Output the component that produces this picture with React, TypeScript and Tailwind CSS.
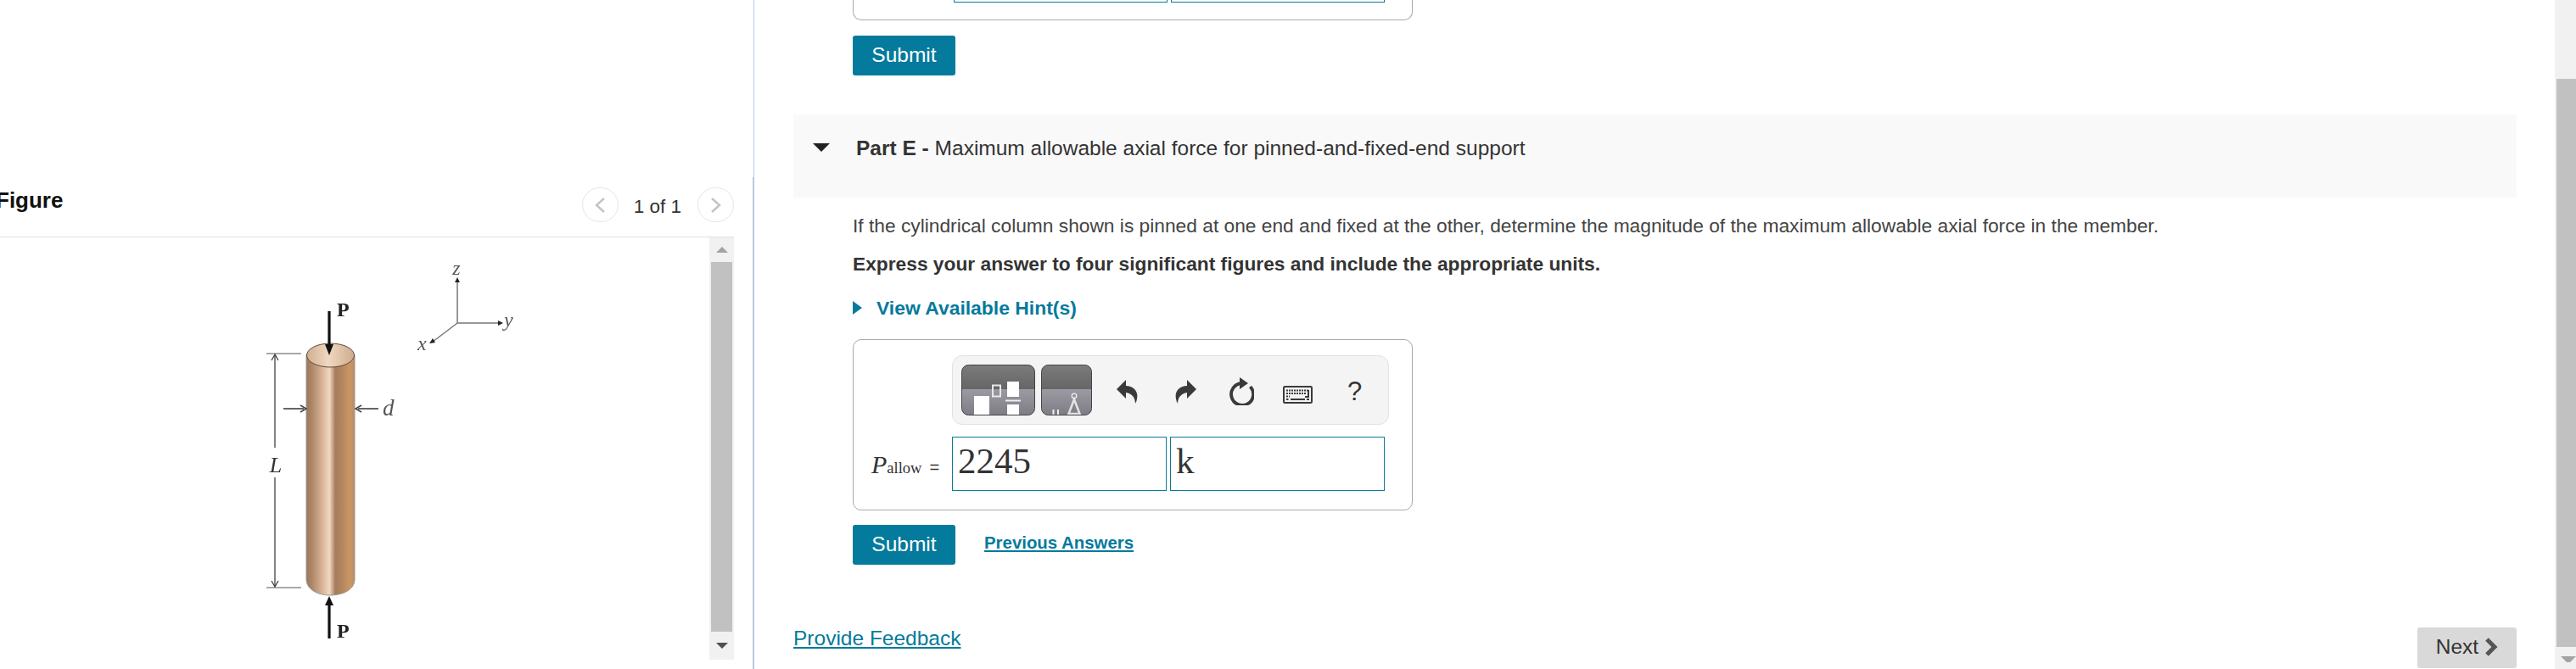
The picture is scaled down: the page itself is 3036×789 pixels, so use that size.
import React from 'react';

const sans = "font-['Liberation_Sans',Arial,sans-serif]";

const SubmitButton = () => (
  <button className="h-[47px] w-[121px] rounded-[3px] bg-[#047a9c] pb-[1px] text-[24.500px] text-white">Submit</button>
);

const Undo = ({ flip }: { flip?: boolean }) => (
  <svg width="25" height="28" viewBox="0 0 25 28" className={flip ? '-scale-x-100' : ''}>
    <path d="M0 11 L11 0 V7 C20 7 26 14 24 22 C24 24 23 26 22 28 C22 21 18 16 11 15 V22 Z" fill="#3a3a3a" />
  </svg>
);

const Reset = () => (
  <svg width="30" height="33" viewBox="0 0 30 33">
    <path d="M15 7 A13 13 0 1 0 25.500 11" fill="none" stroke="#3a3a3a" strokeWidth="3.800" />
    <path d="M13 0 L23 7 L13 14 Z" fill="#3a3a3a" />
  </svg>
);

const Keyboard = () => (
  <svg width="35" height="21" viewBox="0 0 35 21">
    <rect x="1" y="1" width="33" height="19" rx="1.5" fill="#f4f4f4" stroke="#3a3a3a" strokeWidth="2" />
    <path d="M4 5.500H30M4 9H27M4 12.500H8" stroke="#3a3a3a" strokeWidth="2.200" strokeDasharray="2 1" fill="none" />
    <path d="M30 5V13H26M9 16H26M4 16H6.500M28 16H31" stroke="#3a3a3a" strokeWidth="2" fill="none" />
  </svg>
);

const TemplateButtons = () => (
  <svg width="154" height="60" viewBox="0 0 154 60">
    <defs>
      <linearGradient id="tplTop" x1="0" y1="0" x2="0" y2="1">
        <stop offset="0" stopColor="#7b7b7d" />
        <stop offset="1" stopColor="#666666" />
      </linearGradient>
      <linearGradient id="tplBot" x1="0" y1="0" x2="0" y2="1">
        <stop offset="0" stopColor="#9c9aa3" />
        <stop offset="1" stopColor="#7d7c84" />
      </linearGradient>
      <clipPath id="tplA"><rect x="0.5" y="0.5" width="86" height="59" rx="8" /></clipPath>
      <clipPath id="tplB"><rect x="94.5" y="0.5" width="59" height="59" rx="8" /></clipPath>
    </defs>
    <g clipPath="url(#tplA)">
      <rect width="87" height="29" fill="url(#tplTop)" />
      <rect y="29" width="87" height="31" fill="url(#tplBot)" />
      <rect x="15" y="37" width="18" height="22" fill="#fff" />
      <rect x="37" y="24.5" width="9" height="13" fill="none" stroke="#e8e8e8" strokeWidth="2" />
      <rect x="54" y="20" width="14" height="18" fill="#fff" />
      <rect x="52" y="41.5" width="18" height="2" fill="#eee" />
      <rect x="54" y="47" width="14" height="12" fill="#fff" />
    </g>
    <rect x="0.5" y="0.5" width="86" height="59" rx="8" fill="none" stroke="#444" />
    <g clipPath="url(#tplB)">
      <rect x="94" width="60" height="29" fill="url(#tplTop)" />
      <rect x="94" y="29" width="60" height="31" fill="url(#tplBot)" />
      <path d="M108.500 53V59M114 53V59" stroke="#eee" strokeWidth="2" />
      <path d="M133 41 L126.500 58 H139.500 Z" fill="none" stroke="#e4e4e4" strokeWidth="2.500" />
      <circle cx="133" cy="37" r="2.800" fill="none" stroke="#eee" strokeWidth="1.300" />
    </g>
    <rect x="94.500" y="0.500" width="59" height="59" rx="8" fill="none" stroke="#444" />
  </svg>
);

const ColumnFigure = () => (
  <svg viewBox="0 280 836 498" className="h-[498px] w-[836px] blur-[0.4px]">
    <defs>
      <linearGradient id="rod" x1="0" y1="0" x2="1" y2="0">
        <stop offset="0" stopColor="#9c7658" />
        <stop offset="0.12" stopColor="#ad8768" />
        <stop offset="0.35" stopColor="#dcb99c" />
        <stop offset="0.48" stopColor="#f1d8c2" />
        <stop offset="0.6" stopColor="#a67c5a" />
        <stop offset="0.72" stopColor="#b0845f" />
        <stop offset="0.9" stopColor="#cb9663" />
        <stop offset="1" stopColor="#b88d68" />
      </linearGradient>
      <linearGradient id="cap" x1="0" y1="0" x2="1" y2="0">
        <stop offset="0" stopColor="#d2ae90" />
        <stop offset="0.45" stopColor="#f0d8c2" />
        <stop offset="1" stopColor="#cfab8c" />
      </linearGradient>
    </defs>

    <path d="M361 419 V683 C361 695 374 702 389 702 C405 702 418 695 418 683 V419 Z" fill="url(#rod)" stroke="#9a9a94" strokeWidth="1" />
    <ellipse cx="389.500" cy="419" rx="28" ry="14" fill="url(#cap)" stroke="#5b4a3d" strokeWidth="1" />

    {/* dimension L */}
    <path d="M314 417H355M314 693H355" stroke="#555" strokeWidth="1.200" />
    <path d="M324 419V528M324 563V691" stroke="#333" strokeWidth="1.200" />
    <path d="M320 425L324 418L328 425M320 685L324 692L328 685" fill="none" stroke="#333" strokeWidth="1.200" />
    <text x="325" y="557" textAnchor="middle" fontFamily="Liberation Serif" fontStyle="italic" fontSize="26" fill="#333">L</text>

    {/* load arrows */}
    <path d="M388 367V408" stroke="#111" strokeWidth="3.200" />
    <path d="M383 406H393L388 419Z" fill="#111" />
    <path d="M388 712V753" stroke="#111" strokeWidth="3.200" />
    <path d="M383 714H393L388 703Z" fill="#111" />
    <text x="397" y="373" fontFamily="Liberation Serif" fontWeight="700" fontSize="24" fill="#222">P</text>
    <text x="397" y="752" fontFamily="Liberation Serif" fontWeight="700" fontSize="24" fill="#222">P</text>

    {/* diameter */}
    <path d="M334 482H358M422 482H446" stroke="#666" strokeWidth="2" />
    <path d="M354 478L361 482L354 486M426 478L419 482L426 486" fill="none" stroke="#444" strokeWidth="1.500" />
    <text x="451" y="490" fontFamily="Liberation Serif" fontStyle="italic" fontSize="27" fill="#555">d</text>

    {/* axes */}
    <path d="M539 381V332M539 381H588M539 381L510 403" stroke="#777" strokeWidth="1.500" fill="none" />
    <path d="M536 333L539 327L542 333ZM587 378L593 381L587 384ZM510 399L506 405L513 404Z" fill="#222" />
    <text x="538" y="324" textAnchor="middle" fontFamily="Liberation Serif" fontStyle="italic" fontSize="24" fill="#555">z</text>
    <text x="594" y="385" fontFamily="Liberation Serif" fontStyle="italic" fontSize="24" fill="#555">y</text>
    <text x="492" y="413" fontFamily="Liberation Serif" fontStyle="italic" fontSize="24" fill="#555">x</text>
  </svg>
);

const PagerButton = ({ dir }: { dir: 'prev' | 'next' }) => (
  <div className="flex h-[41px] w-[43px] items-center justify-center rounded-full border border-[#e6e6e6]">
    <svg width="14" height="20" viewBox="0 0 14 20">
      <path d={dir === 'prev' ? 'M12 2L3 10L12 18' : 'M2 2L11 10L2 18'} fill="none" stroke="#c4c4c4" strokeWidth="2.500" />
    </svg>
  </div>
);

const App = () => {
  return (
    <div className={`${sans} flex h-[789px] w-[3036px] overflow-hidden bg-white text-[#333]`}>
      {/* figure panel */}
      <aside className="w-[889px] shrink-0 border-r border-[#b8cadf] pt-[209px]">
        <div className="h-[580px] border-r border-[#b8cadf] pr-[22px]">
          <div className="flex h-[71px] items-start justify-between border-b border-[#e0e0e0]">
            <h2 className="-ml-[5px] mt-[11px] text-[26px] font-bold leading-[32px] text-[#111]">Figure</h2>
            <div className="mt-[12px] flex items-center">
              <PagerButton dir="prev" />
              <span className="ml-[18px] mr-[19px] mt-[5px] text-[22.500px]">1 of 1</span>
              <PagerButton dir="next" />
            </div>
          </div>
          <div className="flex h-[498px]">
            <ColumnFigure />
            <div className="flex w-[29px] flex-col items-center bg-[#f1f1f1]">
              <div className="flex h-[29px] items-center">
                <div className="border-x-[7px] border-b-[7px] border-x-transparent border-b-[#a3a3a3]" />
              </div>
              <div className="h-[436px] w-[25px] bg-[#c1c1c1]" />
              <div className="flex h-[33px] items-center">
                <div className="border-x-[7px] border-t-[7px] border-x-transparent border-t-[#505050]" />
              </div>
            </div>
          </div>
        </div>
      </aside>

      {/* question panel */}
      <main className="w-[2122px] shrink-0 pl-[46px] pr-[45px]">
        <div className="ml-[70px] h-[24px] w-[660px] rounded-b-[10px] border-x border-b border-[#a9a9a9]">
          <div className="ml-[118px] flex h-[3px] gap-[4px]">
            <div className="w-[252px] border-x border-b border-[#0a7a9a]" />
            <div className="w-[252px] border-x border-b border-[#0a7a9a]" />
          </div>
        </div>

        <div className="ml-[70px] mt-[18px]"><SubmitButton /></div>

        <div className="mt-[46px] flex h-[98px] items-start bg-[#f9f9f9] pl-[24px] pt-[23px]">
          <div className="ml-[-1px] mt-[11px] border-x-[10px] border-t-[10px] border-x-transparent border-t-[#222]" />
          <p className="ml-[31px] text-[24.500px] leading-[34px] text-[#333]">
            <b>Part E - </b>Maximum allowable axial force for pinned-and-fixed-end support
          </p>
        </div>

        <div className="ml-[70px]">
          <p className="mt-[15px] h-[36px] text-[22.750px] leading-[36px] text-[#444]">
            If the cylindrical column shown is pinned at one end and fixed at the other, determine the magnitude of the maximum allowable axial force in the member.
          </p>
          <p className="mt-[9px] h-[36px] text-[22.750px] font-bold leading-[36px]">
            Express your answer to four significant figures and include the appropriate units.
          </p>
          <div className="mt-[16px] flex h-[36px] items-center">
            <div className="border-y-[8px] border-l-[11px] border-y-transparent border-l-[#047a9c]" />
            <span className="ml-[17px] text-[22.900px] font-bold text-[#047a9c]">View Available Hint(s)</span>
          </div>

          {/* answer box */}
          <div className="mt-[19px] h-[202px] w-[660px] rounded-[10px] border border-[#a9a9a9] pl-[116px] pt-[18px]">
            <div className="flex h-[82px] w-[515px] items-center rounded-[12px] border border-[#e2e2e2] bg-[#f4f4f4] pl-[10px]">
              <TemplateButtons />
              <div className="ml-[29px] mt-[3px] flex h-[60px] items-center">
                <Undo />
                <div className="ml-[44px]"><Undo flip /></div>
                <div className="ml-[38px]"><Reset /></div>
                <div className="ml-[34px] mt-[8px]"><Keyboard /></div>
                <span className="ml-[41px] text-[31px] leading-none text-[#333]">?</span>
              </div>
            </div>
            <div className="relative mt-[14px] flex gap-[4px]">
              <div className="absolute -left-[95px] top-[10px] flex items-baseline font-['Liberation_Serif',serif] whitespace-nowrap">
                <i className="text-[30px]">P</i>
                <span className="text-[18.500px]">allow</span>
                <span className={`${sans} ml-[9px] text-[20px]`}>=</span>
              </div>
              <div className="flex h-[64px] w-[253px] items-center border border-[#0a7a9a] pb-[6px] pl-[6px] font-['Liberation_Serif',serif] text-[43px] text-[#333]">2245</div>
              <div className="flex h-[64px] w-[253px] items-center border border-[#0a7a9a] pb-[6px] pl-[6px] font-['Liberation_Serif',serif] text-[43px] text-[#333]">k</div>
            </div>
          </div>

          <div className="mt-[17px] flex items-start">
            <SubmitButton />
            <a className="ml-[34px] mt-[7px] text-[20.400px] font-bold leading-[28px] text-[#047a9c] underline">Previous Answers</a>
          </div>
        </div>

        <div className="mt-[70px] flex items-start justify-between">
          <a className="-mt-[1px] text-[24.500px] leading-[36px] text-[#047a9c] underline">Provide Feedback</a>
          <button className="mt-[4px] flex h-[48px] w-[117px] items-center justify-center gap-[7px] rounded-[3px] bg-[#d9d9d9] pb-[2px] text-[24.500px] text-[#333]">
            Next
            <svg width="16" height="24" viewBox="0 0 16 24">
              <path d="M3 3L12 12L3 21" fill="none" stroke="#555" strokeWidth="5" />
            </svg>
          </button>
        </div>
      </main>

      {/* page scrollbar */}
      <div className="relative w-[25px] shrink-0 bg-[#f1f1f1] pl-[2px] pt-[93px]">
        <div className="h-[670px] bg-[#c1c1c1]" />
        <div className="ml-[5px] mt-[11px] border-x-[7px] border-t-[7px] border-x-transparent border-t-[#a3a3a3]" />
      </div>
    </div>
  );
};

export default App;
